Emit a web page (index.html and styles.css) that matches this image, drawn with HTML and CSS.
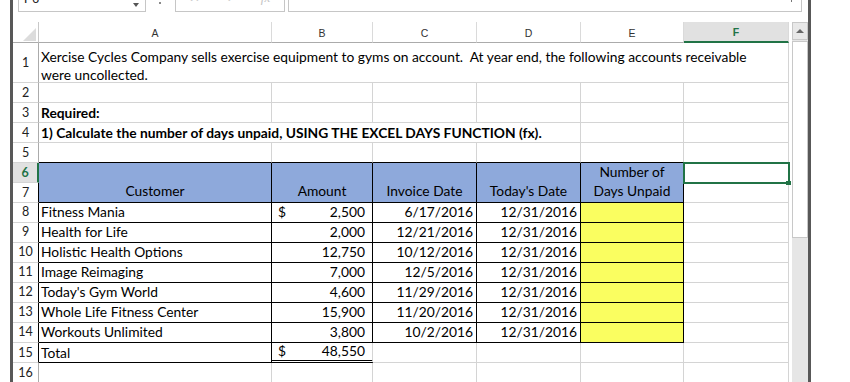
FILE: index.html
```html
<!DOCTYPE html>
<html>
<head>
<meta charset="utf-8">
<link rel="stylesheet" href="styles.css">
</head>
<body>
<div class="app">
  <div class="edge"></div>
  <div class="main">
    <div class="fbar">
      <div class="namebox"><span class="nb-text">F6</span><span class="nb-arrow"></span></div>
      <div class="fdot"></div>
      <div class="fnbox"><span class="fx-x">✕</span><span class="fx-ok">✓</span><span class="fx-fx">fx</span></div>
      <div class="formula"><span class="fexp"></span></div>
    </div>
    <div class="body">
      <div class="sheet">
        <!-- header -->
        <div class="corner"><span class="tri"></span></div>
        <div class="ch">A</div><div class="ch">B</div><div class="ch">C</div><div class="ch">D</div><div class="ch">E</div><div class="ch chsel">F</div>
        <!-- row 1 -->
        <div class="c rh">1</div>
        <div class="c a1"><span class="a1t">Xercise Cycles Company sells exercise equipment to gyms on account.&nbsp; At year end, the following accounts receivable<br>were uncollected.</span></div>
        <!-- row 2 -->
        <div class="c rh">2</div><div class="c"></div><div class="c"></div><div class="c"></div><div class="c"></div><div class="c"></div><div class="c"></div>
        <!-- row 3 -->
        <div class="c rh">3</div><div class="c b">Required:</div><div class="c"></div><div class="c"></div><div class="c"></div><div class="c"></div><div class="c"></div>
        <!-- row 4 -->
        <div class="c rh">4</div><div class="c b a4">1) Calculate the number of days unpaid, USING THE EXCEL DAYS FUNCTION (fx).</div><div class="c"></div><div class="c"></div>
        <!-- row 5 -->
        <div class="c rh">5</div><div class="c bb"></div><div class="c bb"></div><div class="c bb"></div><div class="c bb"></div><div class="c bb"></div><div class="c"></div>
        <!-- row 6-7 -->
        <div class="c rh rsel">6</div>
        <div class="c hd">Customer</div>
        <div class="c hd">Amount</div>
        <div class="c hd">Invoice Date</div>
        <div class="c hd">Today's Date</div>
        <div class="c hd"><span>Number of<br>Days Unpaid</span></div>
        <div class="c f6"><span class="selbox"></span><span class="handle"></span></div>
        <div class="c rh bkr">7</div><div class="c"></div>
        <!-- rows 8-14 -->
        <div class="c rh bkr dr">8</div><div class="c bk dr">Fitness Mania</div><div class="c bk acct dr"><span>$</span><span>2,500</span></div><div class="c bk r dr">6/17/2016</div><div class="c bk r dr">12/31/2016</div><div class="c bk y"></div><div class="c"></div>
        <div class="c rh bkr dr">9</div><div class="c bk dr">Health for Life</div><div class="c bk acct dr"><span></span><span>2,000</span></div><div class="c bk r dr">12/21/2016</div><div class="c bk r dr">12/31/2016</div><div class="c bk y"></div><div class="c"></div>
        <div class="c rh bkr dr">10</div><div class="c bk dr">Holistic Health Options</div><div class="c bk acct dr"><span></span><span>12,750</span></div><div class="c bk r dr">10/12/2016</div><div class="c bk r dr">12/31/2016</div><div class="c bk y"></div><div class="c"></div>
        <div class="c rh bkr dr">11</div><div class="c bk dr">Image Reimaging</div><div class="c bk acct dr"><span></span><span>7,000</span></div><div class="c bk r dr">12/5/2016</div><div class="c bk r dr">12/31/2016</div><div class="c bk y"></div><div class="c"></div>
        <div class="c rh bkr dr">12</div><div class="c bk dr">Today's Gym World</div><div class="c bk acct dr"><span></span><span>4,600</span></div><div class="c bk r dr">11/29/2016</div><div class="c bk r dr">12/31/2016</div><div class="c bk y"></div><div class="c"></div>
        <div class="c rh bkr dr">13</div><div class="c bk dr">Whole Life Fitness Center</div><div class="c bk acct dr"><span></span><span>15,900</span></div><div class="c bk r dr">11/20/2016</div><div class="c bk r dr">12/31/2016</div><div class="c bk y"></div><div class="c"></div>
        <div class="c rh bkr dr">14</div><div class="c bk dr">Workouts Unlimited</div><div class="c bk acct dr"><span></span><span>3,800</span></div><div class="c bk r dr">10/2/2016</div><div class="c bk r dr">12/31/2016</div><div class="c bk y"></div><div class="c"></div>
        <!-- row 15 -->
        <div class="c rh bkr">15</div><div class="c bk">Total</div><div class="c acct dbl"><span>$</span><span>48,550</span></div><div class="c"></div><div class="c"></div><div class="c"></div><div class="c"></div>
        <!-- row 16 -->
        <div class="c rh">16</div><div class="c"></div><div class="c"></div><div class="c"></div><div class="c"></div><div class="c"></div><div class="c"></div>
      </div>
      <div class="vscroll">
        <div class="vbtn"><span class="uptri"></span></div>
        <div class="thumb"></div>
      </div>
    </div>
  </div>
  <div class="edge"></div>
</div>
</body>
</html>
```

FILE: styles.css
```css
html, body {
  margin: 0;
  padding: 0;
  background: #ffffff;
}
body {
  width: 850px;
  height: 382px;
  overflow: hidden;
}
.app {
  display: flex;
  height: 382px;
  padding-left: 10px;
}
.edge {
  flex: none;
  width: 3px;
  background: #585858;
}
.main {
  flex: none;
  width: 795px;
  display: flex;
  flex-direction: column;
}

/* formula bar (mostly scrolled above the viewport) */
.fbar {
  display: flex;
  height: 24px;
  margin-top: -12px;
  flex: none;
}
.namebox {
  margin-left: 5px;
  width: 128px;
  box-sizing: border-box;
  border: 1px solid #c6c6c6;
  display: flex;
  justify-content: space-between;
  align-items: flex-start;
  padding: 3px 6px 0 5px;
  font: 13px/14px "Liberation Sans", sans-serif;
  color: #222;
}
.nb-arrow {
  width: 0;
  height: 0;
  margin-top: 11px;
  border-left: 3px solid transparent;
  border-right: 3px solid transparent;
  border-top: 4px solid #555;
}
.fdot {
  align-self: flex-end;
  width: 2px;
  height: 2px;
  margin: 0 0 8px 13px;
  background: #8a8a8a;
}
.fnbox {
  margin-left: 14px;
  width: 110px;
  box-sizing: border-box;
  border: 1px solid #c6c6c6;
  display: flex;
  align-items: flex-start;
  padding: 2px 0 0 13px;
  font: 13px/14px "DejaVu Sans", sans-serif;
  color: #c4c4c4;
}
.fx-ok { margin-left: 26px; }
.fx-fx { margin-left: 24px; font-style: italic; font-family: "Liberation Serif", serif; }
.formula {
  margin-left: 3px;
  width: 514px;
  box-sizing: border-box;
  border: 1px solid #c6c6c6;
  display: flex;
  justify-content: flex-end;
  align-items: flex-end;
  padding: 0 9px 9px 0;
}
.fexp {
  width: 1px;
  height: 3px;
  background: #777;
}

/* sheet */
.body {
  display: flex;
  margin-top: 10px;
  height: 361px;
}
.sheet {
  flex: none;
  width: 776px;
  display: grid;
  grid-template-columns: 26px 233px 101px 104px 104px 103px 105px;
  grid-template-rows: 21px 40px repeat(15, 20px);
  font: 13.8px "Lato", sans-serif;
  color: #000;
}
.corner {
  box-sizing: border-box;
  border-right: 1px solid #c8c8c8;
  border-bottom: 1px solid #ababab;
  display: flex;
  justify-content: flex-end;
  align-items: flex-end;
  padding: 0 2px 1px 0;
}
.tri {
  width: 13px;
  height: 13px;
  background: #dcdcdc;
  clip-path: polygon(100% 0, 100% 100%, 0 100%);
}
.ch {
  box-sizing: border-box;
  border-right: 1px solid #dadada;
  border-bottom: 1px solid #ababab;
  display: flex;
  align-items: center;
  justify-content: center;
  font: 10.5px "Liberation Sans", sans-serif;
  color: #333;
  padding-top: 1px;
}
.chsel {
  background: #e1e1e1;
  color: #217346;
  font-weight: bold;
  border-bottom: 2px solid #217346;
}
.c {
  box-sizing: border-box;
  border-right: 1px solid #d4d4d4;
  border-bottom: 1px solid #d4d4d4;
  display: flex;
  align-items: flex-end;
  padding: 0 2px;
  line-height: 19px;
  white-space: nowrap;
}
.b { font-weight: bold; }
.a1 {
  grid-column: span 6;
  line-height: 18px;
}
.a1t { margin-bottom: -2px; }
.a4 { grid-column: span 4; }
.rh {
  justify-content: center;
  align-items: center;
  padding: 0;
  border-right-color: #ababab;
  font-size: 12.5px;
  color: #222;
}
.rh.bkr { border-right-color: #000; }
.rh.rsel {
  background: #e1e1e1;
  color: #217346;
  font-weight: bold;
  border-right: 2px solid #217346;
}
.bb { border-bottom-color: #000; }
.bk {
  border-right-color: #000;
  border-bottom-color: #000;
}
.hd {
  grid-row: span 2;
  background: #8ea9db;
  border-right-color: #000;
  border-bottom-color: #000;
  justify-content: center;
  text-align: center;
  padding-bottom: 2px;
}
.r {
  justify-content: flex-end;
  padding-right: 3px;
}
.acct {
  justify-content: space-between;
  padding: 0 7px 0 6px;
}
.dr { padding-bottom: 1px; }
.rh.dr { padding-bottom: 2px; }
.y { background: #fafe60; }
.dbl { border-bottom: 3px double #000; }
.f6 { position: relative; }
.selbox {
  position: absolute;
  left: -1px;
  top: -1px;
  width: 107px;
  height: 22px;
  box-sizing: border-box;
  border: 2px solid #217346;
}
.handle {
  position: absolute;
  left: 102px;
  top: 18px;
  width: 5px;
  height: 4px;
  background: #217346;
}

/* vertical scrollbar */
.vscroll {
  flex: none;
  width: 16px;
  margin-left: 3px;
  background: #e6e6e6;
  display: flex;
  flex-direction: column;
}
.vbtn {
  height: 18px;
  box-sizing: border-box;
  border: 1px solid #c8c8c8;
  background: #e8e8e8;
  display: flex;
  align-items: center;
  justify-content: center;
}
.uptri {
  width: 0;
  height: 0;
  border-left: 4px solid transparent;
  border-right: 4px solid transparent;
  border-bottom: 4px solid #666;
}
.thumb {
  margin-top: 1px;
  height: 197px;
  box-sizing: border-box;
  border: 1px solid #c8c8c8;
  background: #ffffff;
}
```
